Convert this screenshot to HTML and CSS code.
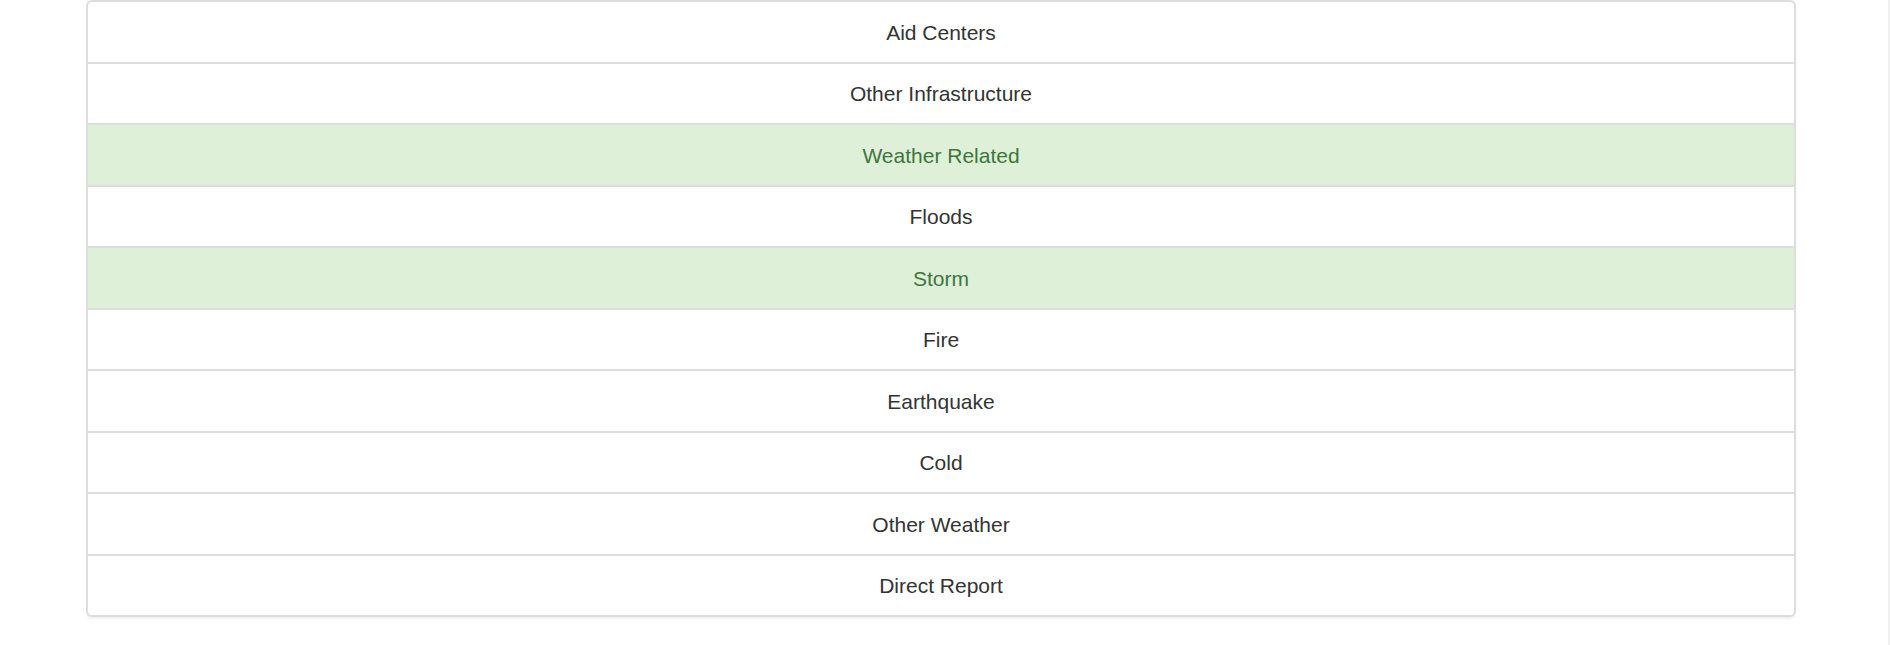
FILE: index.html
```html
<!DOCTYPE html>
<html>
<head>
<meta charset="utf-8">
<link rel="stylesheet" href="styles.css">
</head>
<body>
<div class="page">
  <div class="main">
    <ul class="list-group">
      <li class="item">Aid Centers</li>
      <li class="item">Other Infrastructure</li>
      <li class="item success">Weather Related</li>
      <li class="item">Floods</li>
      <li class="item success">Storm</li>
      <li class="item">Fire</li>
      <li class="item">Earthquake</li>
      <li class="item">Cold</li>
      <li class="item">Other Weather</li>
      <li class="item">Direct Report</li>
    </ul>
  </div>
  <div class="edge"></div>
</div>
</body>
</html>
```

FILE: styles.css
```css
html, body {
  margin: 0;
  padding: 0;
  background: #fff;
}
body {
  font-family: "Liberation Sans", Arial, sans-serif;
  font-size: 21px;
  color: #333;
}
.page {
  display: flex;
  width: 1890px;
  height: 645px;
  overflow: hidden;
}
.main {
  flex: 1;
  padding: 0 92px 0 86px;
}
.edge {
  width: 2px;
  background: #f0f0f0;
}
.list-group {
  list-style: none;
  margin: 0;
  padding: 0;
  border-radius: 6px;
  box-shadow: 0 1.5px 2px rgba(0, 0, 0, 0.06);
}
.item {
  display: block;
  text-align: center;
  line-height: 30px;
  padding: 15.5px 22px 14px;
  background: #fff;
  border: 2px solid #ddd;
  margin-bottom: -2px;
}
.item:first-child {
  border-top-left-radius: 6px;
  border-top-right-radius: 6px;
}
.item:last-child {
  margin-bottom: 0;
  border-bottom-left-radius: 6px;
  border-bottom-right-radius: 6px;
}
.item.success {
  background: #dff0d8;
  color: #3c763d;
}
```
